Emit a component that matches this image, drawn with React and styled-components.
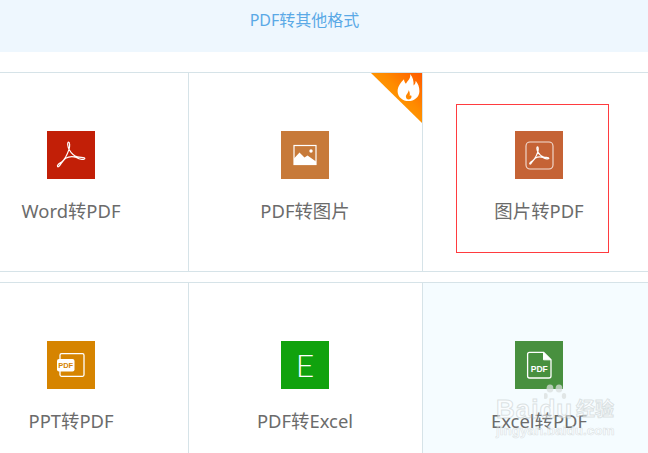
import React from "react";
import styled,{createGlobalStyle} from "styled-components";

const GlobalStyle = createGlobalStyle`
    html,body{margin:0;padding:0;background:#fff;}
    body{font-family:"Noto Sans","Noto Sans CJK SC",sans-serif;}
`;
const Page = styled.div`
    width:648px;height:453px;position:relative;overflow:hidden;background:#fff;
`;
const Banner = styled.div`
    width:699px;height:52px;margin-left:-45px;background:#eef7fe;color:#5aa9e6;font-size:16px;line-height:40px;text-align:center;
`;
const Rows = styled.div`
    margin:20px 0 0 -45px;display:flex;flex-direction:column;row-gap:10px;
`;
const Row = styled.div`
    display:grid;grid-template-columns:repeat(3,234px);width:702px;height:200px;box-sizing:border-box;border-top:1px solid #d6e3e8;border-bottom:1px solid #d6e3e8;
`;
const Cell = styled.div`
    position:relative;display:flex;flex-direction:column;align-items:center;box-sizing:border-box;padding:58px 1px 0 0;
    border-right:1px solid #d6e3e8;background:${props => props.$active ? "#f5fcff" : "#fff"};
`;
const IconBox = styled.div`
    width:48px;height:48px;background:${props => props.$color};display:flex;align-items:center;justify-content:center;
    & svg{display:block;}
`;
const Letter = styled.span`
    color:#fff;font-family:"Lato","Noto Sans",sans-serif;font-weight:300;font-size:32px;line-height:48px;
`;
const Label = styled.div`
    margin-top:20px;font-size:18.4px;line-height:24px;color:#6b6b6b;white-space:nowrap;
`;
const HotBadge = styled.div`
    position:absolute;top:0;right:0;width:51px;height:50px;box-sizing:border-box;padding:1px 2px 0 0;display:flex;justify-content:flex-end;align-items:flex-start;
    background:linear-gradient(225deg,#ff5a00 0%,#ff8c00 40%,#ffb000 100%);clip-path:polygon(0 0,100% 0,100% 100%);
`;
const Highlight = styled.div`
    position:absolute;left:456px;top:104px;width:153px;height:149px;box-sizing:border-box;border:1px solid #ff3b3f;pointer-events:none;
`;
const Watermark = styled.div`
    position:absolute;left:496px;top:384px;width:118px;box-sizing:border-box;padding-top:13px;display:flex;flex-direction:column;row-gap:2px;pointer-events:none;color:rgba(255,255,255,.55);
    & svg{position:absolute;left:48px;top:0;}
`;
const MarkRow = styled.div`
    display:flex;align-items:center;justify-content:space-between;height:24px;
`;
const MarkBrand = styled.span`
    font-family:"Liberation Sans",sans-serif;font-weight:700;font-size:26px;line-height:24px;letter-spacing:1px;-webkit-text-stroke:1px rgba(190,198,198,.5);
`;
const MarkWord = styled.span`
    font-size:19px;line-height:24px;font-weight:700;-webkit-text-stroke:1px rgba(190,198,198,.5);
`;
const MarkUrl = styled.span`
    font-family:"Liberation Sans",sans-serif;font-size:13.5px;line-height:16px;font-weight:700;-webkit-text-stroke:.7px rgba(190,198,198,.45);white-space:nowrap;
`;
const ACROBAT = "M10.6 35.6C9.6 34.2 12.4 32.4 14.6 31C17.6 28.6 20.6 22.6 22 18.4C23 15 22.8 11.2 21.6 11.2C20.2 11.2 20.4 15.6 22.4 19C24.6 22.8 27 25 30.4 25.8C33.6 26.6 37.8 26 37.8 27.4C37.8 29 32.6 28.6 29.4 26.4C26.4 25.4 21.6 25.6 18.6 27.2C15.4 29.4 12 37.2 10.6 35.6Z";
const FlameIcon = () => (
    <svg width="23" height="27" viewBox="0 0 21 26">
        <path fill="#fff" fillRule="evenodd" d="M12 0C13 4 10 6 8 9.5C6.8 8 6.2 6.5 6.2 5C3 8 0 12 0 16.5C0 22 5 26 10.5 26C16 26 21 22 21 16.5C21 12.5 19.6 9 17.4 6.5C17.4 8.5 16.8 10 15.4 11C15.6 7 14.8 3 12 0ZM10.5 15.5C11 18 8 19.5 8 22C8 23.6 9.2 24.6 10.5 24.6C12 24.6 13.4 23.6 13.4 22C13.4 21.2 13.1 20.6 12.7 20.2C12.5 20.8 12.2 21.1 11.7 21.2C12 19.2 11.6 17 10.5 15.5Z"/>
    </svg>
);
const AcrobatIcon = () => (
    <svg width="48" height="48" viewBox="0 0 48 48" fill="none">
        <path d={ACROBAT} stroke="#fff" strokeWidth="1.2" strokeLinejoin="round"/>
    </svg>
);
const PictureIcon = () => (
    <svg width="48" height="48" viewBox="0 0 48 48" fill="none">
        <rect x="13" y="14.5" width="22" height="19" stroke="#fff" strokeWidth="1.2"/>
        <path d="M13 34V27.5L18.5 21.5L23.5 26.5L26.5 24.5L35 30.5V34Z" fill="#fff"/>
        <circle cx="30" cy="20" r="1.7" fill="#fff"/>
    </svg>
);
const FramedAcrobatIcon = () => (
    <svg width="48" height="48" viewBox="0 0 48 48" fill="none">
        <rect x="11" y="11" width="27" height="27" rx="4" stroke="#fff" strokeOpacity=".8" strokeWidth="1.1"/>
        <g transform="translate(7.4 8) scale(.7)">
            <path d={ACROBAT} stroke="#fff" strokeWidth="1.7" strokeLinejoin="round"/>
        </g>
    </svg>
);
const SlideIcon = () => (
    <svg width="48" height="48" viewBox="0 0 48 48" fill="none">
        <rect x="13" y="12.7" width="24" height="22.6" rx="1.5" stroke="#fff" strokeWidth="1.3"/>
        <rect x="10" y="18" width="17.5" height="12.5" rx="2" fill="#fff"/>
        <text x="18.7" y="27" fill="#d68400" fontFamily="Liberation Sans" fontSize="7.5" fontWeight="700" textAnchor="middle">PDF</text>
    </svg>
);
const DocIcon = () => (
    <svg width="48" height="48" viewBox="0 0 48 48" fill="none">
        <path d="M14.5 11.3H28.5L36 18.8V35C36 36.2 35.2 37 34 37H14.5C13.3 37 12.6 36.2 12.6 35V13.2C12.6 12 13.3 11.3 14.5 11.3Z" stroke="#fff" strokeWidth="1.3" strokeLinejoin="round"/>
        <path d="M28.5 11.3V18.8H36" fill="#fff" stroke="#fff" strokeWidth="1"/>
        <text x="24.3" y="30.5" fill="#fff" fontFamily="Liberation Sans" fontSize="8.5" fontWeight="700" textAnchor="middle">PDF</text>
    </svg>
);
const TOOLS = [
    [
        {label:"Word转PDF",color:"#c21f07",icon:<AcrobatIcon/>},
        {label:"PDF转图片",color:"#c77a3a",icon:<PictureIcon/>,hot:true},
        {label:"图片转PDF",color:"#c56335",icon:<FramedAcrobatIcon/>}
    ],
    [
        {label:"PPT转PDF",color:"#d68400",icon:<SlideIcon/>},
        {label:"PDF转Excel",color:"#10a20d",icon:<Letter>E</Letter>},
        {label:"Excel转PDF",color:"#48903f",icon:<DocIcon/>,active:true}
    ]
];
const App = () => {
    return (
        <React.Fragment>
            <GlobalStyle/>
            <Page>
                <Banner>PDF转其他格式</Banner>
                <Rows>
                    {TOOLS.map((row,i) => (
                        <Row key={i}>
                            {row.map((tool) => (
                                <Cell key={tool.label} $active={tool.active}>
                                    {tool.hot ? <HotBadge><FlameIcon/></HotBadge> : null}
                                    <IconBox $color={tool.color}>{tool.icon}</IconBox>
                                    <Label>{tool.label}</Label>
                                </Cell>
                            ))}
                        </Row>
                    ))}
                </Rows>
                <Highlight/>
                <Watermark>
                    <svg width="24" height="26" viewBox="0 0 24 26" fill="#d9dfdd" fillOpacity=".75">
                        <ellipse cx="6" cy="4.5" rx="3.4" ry="4"/>
                        <ellipse cx="15" cy="4.5" rx="3.4" ry="4"/>
                        <ellipse cx="1.5" cy="12" rx="2.2" ry="3"/>
                        <ellipse cx="20" cy="12" rx="2.2" ry="3"/>
                    </svg>
                    <MarkRow>
                        <MarkBrand>Baidu</MarkBrand>
                        <MarkWord>经验</MarkWord>
                    </MarkRow>
                    <MarkUrl>jingyan.baidu.com</MarkUrl>
                </Watermark>
            </Page>
        </React.Fragment>
    );
}
export default App;
